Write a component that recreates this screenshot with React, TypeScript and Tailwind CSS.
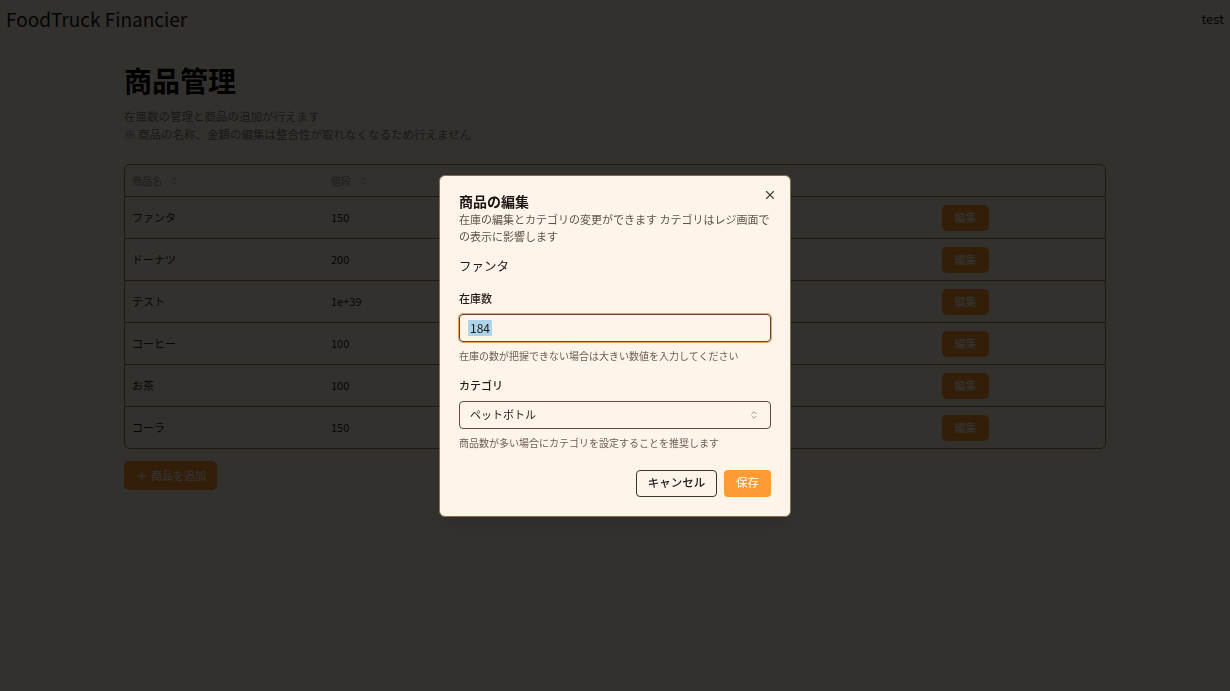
import { ChevronsUpDown, Plus, X } from "lucide-react";

type Product = {
  name: string;
  price: string;
};

const products: Product[] = [
  { name: "ファンタ", price: "150" },
  { name: "ドーナツ", price: "200" },
  { name: "テスト", price: "1e+39" },
  { name: "コーヒー", price: "100" },
  { name: "お茶", price: "100" },
  { name: "コーラ", price: "150" },
];

// columns under the dialog are left blank: they are hidden in the screenshot
const cols = "grid grid-cols-[199px_204px_204px_203px_1fr]";

const SortHeader = ({ label }: { label: string }) => (
  <div className="flex items-center gap-[7px] px-[7px] text-[10px] text-[#9c9188]">
    <span>{label}</span>
    <ChevronsUpDown size={10} strokeWidth={2} />
  </div>
);

const ProductTable = () => (
  <div className="mt-[21px] rounded-[6px] border border-[#a57c55]">
    <div className={`${cols} h-[32px] items-center border-b border-[#a57c55]`}>
      <SortHeader label="商品名" />
      <SortHeader label="値段" />
      <div />
      <div />
      <div />
    </div>
    {products.map((p, i) => (
      <div
        key={p.name}
        className={`${cols} items-center text-[11px] text-[#2a2420] ${
          i < products.length - 1 ? "h-[42px] border-b border-[#a57c55]" : "h-[41px]"
        }`}
      >
        <div className="px-[7px]">{p.name}</div>
        <div className="px-[7px]">{p.price}</div>
        <div className="px-[7px]" />
        <div className="px-[7px]" />
        <div className="px-[7px]">
          <button className="flex h-[26px] w-[47px] items-center justify-center rounded-[5px] bg-[#ff9a2e] text-[11px] text-white">
            編集
          </button>
        </div>
      </div>
    ))}
  </div>
);

const EditDialog = () => (
  <div className="fixed inset-0 flex items-center justify-center bg-black/80">
    <div className="relative w-[352px] rounded-[6px] border border-[#8c6b4f] bg-[#fff4e9] px-[19px] pt-[17px] pb-[19px] shadow-lg">
      <button className="absolute top-[12px] right-[13px] text-[#4a4038]">
        <X size={14} strokeWidth={2} />
      </button>

      <h2 className="text-[14px] leading-[17px] font-bold text-[#1a1512]">商品の編集</h2>
      <p className="mt-[1px] text-[11px] leading-[17px] text-[#5e534b]">
        在庫の編集とカテゴリの変更ができます カテゴリはレジ画面での表示に影響します
      </p>

      <p className="mt-[11px] text-[12.5px] leading-[20px] text-[#1f1a17]">ファンタ</p>

      <label className="mt-[14px] block text-[11px] leading-[16px] font-medium text-[#1f1a17]">在庫数</label>
      <div className="mt-[8px] flex h-[28px] items-center rounded-[4px] border border-[#5a4536] pl-[8px] text-[12px] text-[#1f1a17] ring-1 ring-[#f5a04a]">
        <span className="bg-[#acd5ea] px-[2px] leading-[16px]">184</span>
      </div>
      <p className="mt-[7px] text-[10px] leading-[14px] text-[#6b5f56]">
        在庫の数が把握できない場合は大きい数値を入力してください
      </p>

      <label className="mt-[14px] block text-[11px] leading-[16px] font-medium text-[#1f1a17]">カテゴリ</label>
      <div className="mt-[8px] flex h-[28px] items-center justify-between rounded-[4px] border border-[#5e4b3e] pr-[11px] pl-[10px] text-[11px] text-[#1f1a17]">
        <span>ペットボトル</span>
        <ChevronsUpDown size={10} strokeWidth={2} className="text-[#8a7d73]" />
      </div>
      <p className="mt-[7px] text-[10px] leading-[14px] text-[#6b5f56]">
        商品数が多い場合にカテゴリを設定することを推奨します
      </p>

      <div className="mt-[20px] flex justify-end gap-[7px]">
        <button className="flex h-[27px] w-[81px] items-center justify-center rounded-[4px] border border-[#3f342c] text-[11.5px] font-medium text-[#1f1a17]">
          キャンセル
        </button>
        <button className="flex h-[27px] w-[47px] items-center justify-center rounded-[4px] bg-[#ff9b34] text-[11.5px] text-white">
          保存
        </button>
      </div>
    </div>
  </div>
);

export default function App() {
  return (
    <div className="min-h-screen bg-[#fff3e6] font-['Noto_Sans_CJK_JP',sans-serif]">
      <header className="flex h-[38px] items-center justify-between px-[6px]">
        <span className="text-[19px] text-[#1a1a1a]">FoodTruck Financier</span>
        <span className="text-[13px] text-[#1a1a1a]">test</span>
      </header>

      <main className="mx-auto w-[982px]">
        <h1 className="mt-[24px] text-[28px] leading-[36px] font-bold text-black">商品管理</h1>
        <p className="mt-[9px] text-[11.5px] leading-[18px] text-[#857a70]">在庫数の管理と商品の追加が行えます</p>
        <p className="text-[11.5px] leading-[18px] text-[#857a70]">
          ※ 商品の名称、金額の編集は整合性が取れなくなるため行えません
        </p>

        <ProductTable />

        <button className="mt-[12px] flex h-[29px] w-[93px] items-center gap-[2px] rounded-[5px] bg-[#ff9a2e] pl-[11px] text-[11px] text-white">
          <Plus size={14} strokeWidth={2} />
          商品を追加
        </button>
      </main>

      <EditDialog />
    </div>
  );
}
